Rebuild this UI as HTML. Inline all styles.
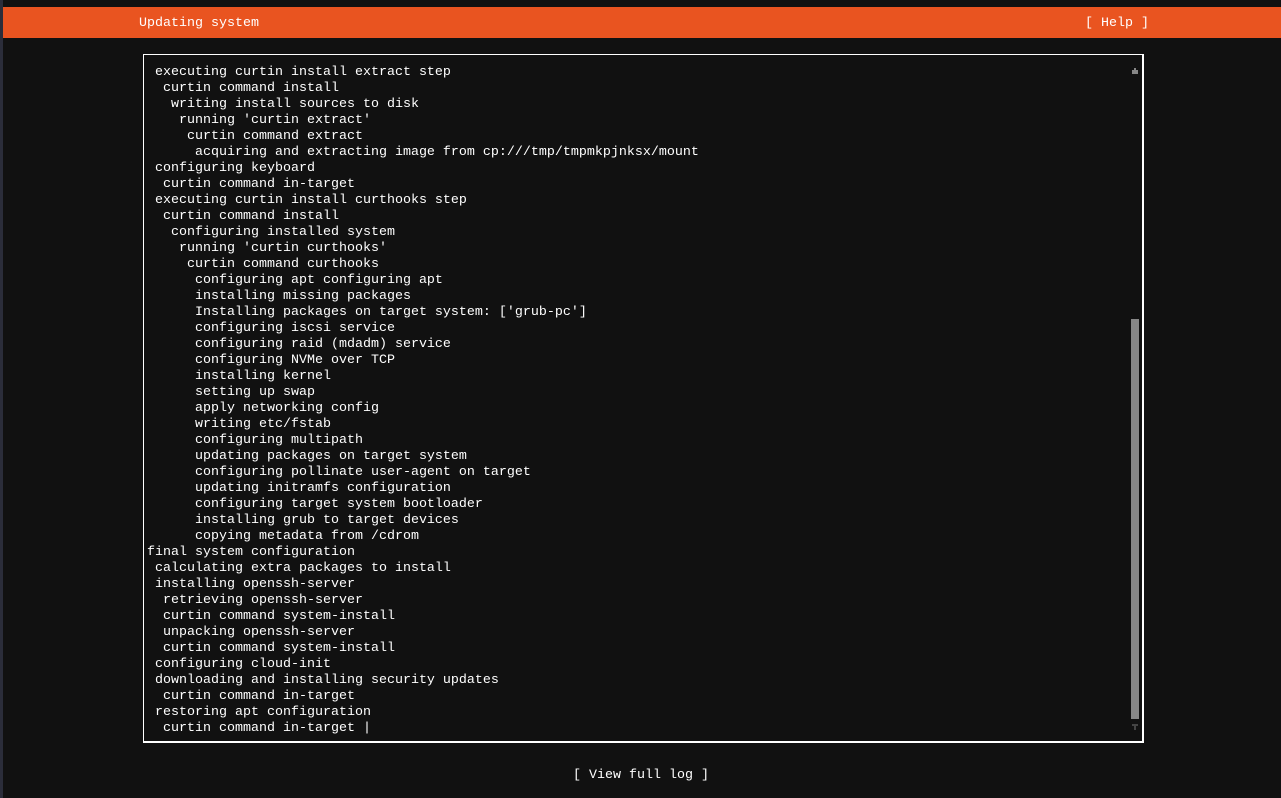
<!DOCTYPE html>
<html><head><meta charset="utf-8"><style>
html,body{margin:0;padding:0;background:#111;width:1281px;height:798px;overflow:hidden;font-family:"Liberation Mono",monospace;font-size:13.33px;color:#fff}
.strip{position:absolute;left:0;top:0;width:3px;height:798px;background:#2b2d3a}
.top{position:absolute;left:3px;top:7px;width:1278px;height:31px;background:#e95420}
.t{position:absolute;white-space:pre;line-height:16px}
.box{position:absolute;left:143px;top:54px;width:998px;height:686px;border:2px solid #fff;border-width:1px 2px 2px 1px}
pre{position:absolute;left:147px;top:65px;margin:0;font:inherit;line-height:16px;color:#fff}
.thumb{position:absolute;left:1131px;top:319px;width:8px;height:400px;background:#878787}
</style></head><body>
<div class="strip"></div>
<div class="top"></div>
<div class="t" style="left:139px;top:16px">Updating system</div>
<div class="t" style="left:1085px;top:16px">[ Help ]</div>
<div class="box"></div>
<pre> executing curtin install extract step
  curtin command install
   writing install sources to disk
    running 'curtin extract'
     curtin command extract
      acquiring and extracting image from cp:///tmp/tmpmkpjnksx/mount
 configuring keyboard
  curtin command in-target
 executing curtin install curthooks step
  curtin command install
   configuring installed system
    running 'curtin curthooks'
     curtin command curthooks
      configuring apt configuring apt
      installing missing packages
      Installing packages on target system: ['grub-pc']
      configuring iscsi service
      configuring raid (mdadm) service
      configuring NVMe over TCP
      installing kernel
      setting up swap
      apply networking config
      writing etc/fstab
      configuring multipath
      updating packages on target system
      configuring pollinate user-agent on target
      updating initramfs configuration
      configuring target system bootloader
      installing grub to target devices
      copying metadata from /cdrom
final system configuration
 calculating extra packages to install
 installing openssh-server
  retrieving openssh-server
  curtin command system-install
  unpacking openssh-server
  curtin command system-install
 configuring cloud-init
 downloading and installing security updates
  curtin command in-target
 restoring apt configuration
  curtin command in-target |</pre>
<svg style="position:absolute;left:1132px;top:68px" width="6" height="6"><path d="M2 0h2v2h2v4H0V2h2z" fill="#878787"/></svg>
<div class="thumb"></div>
<svg style="position:absolute;left:1132px;top:724px" width="6" height="6"><path d="M0 0h6v2H4v4H2V2H0z" fill="#444"/></svg>
<div class="t" style="left:573px;top:768px">[ View full log ]</div>
</body></html>
